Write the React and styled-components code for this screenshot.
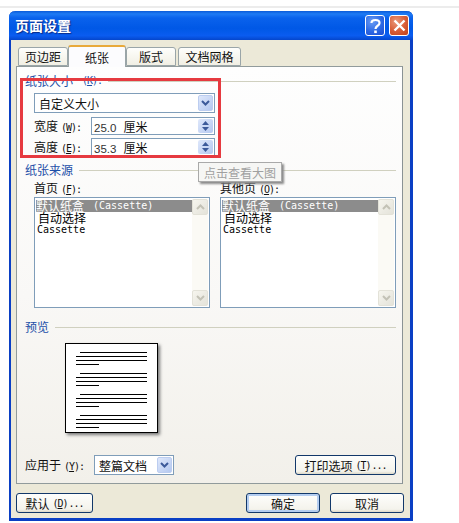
import React from "react";
import styled, { createGlobalStyle } from "styled-components";

const Global = createGlobalStyle`
  html, body { margin: 0; padding: 0; background: #fff; }
  body { font-family: "Noto Sans CJK SC", "Liberation Sans", sans-serif; font-size: 12px; color: #111; }
`;
const Page = styled.div`
  width: 459px; height: 523px; overflow: hidden; box-sizing: border-box; position: relative;
  padding: 11px 0 0 9px;
  &::before { content: ""; position: absolute; left: 0; right: 0; top: 6px; height: 2px; background: #ececec; }
`;
const Win = styled.div`
  width: 404px; height: 510px; box-sizing: border-box; position: relative;
  display: flex; flex-direction: column;
  background: #ece9d8; border: solid #0a3fc4; border-width: 0 3px 3px 2px;
  border-radius: 6px 6px 0 0;
`;
const TitleBar = styled.div`
  height: 29px; margin: 0 -3px 0 -2px; padding: 0 4px 0 6px; flex: none;
  display: flex; align-items: center; gap: 4px; border-radius: 6px 6px 0 0;
  background: linear-gradient(180deg, #0a5ad8 0%, #1f7bf4 10%, #0a62ec 24%, #0058e6 60%, #0a5cf0 85%, #0546cc 100%);
`;
const Title = styled.div`
  flex: 1; color: #fff; font-size: 14px; font-weight: 700; line-height: 29px; padding-left: 0;
  text-shadow: 1px 1px 1px #0a2a88;
`;
const CapBtn = styled.div`
  width: 20px; height: 21px; box-sizing: border-box; border: 1px solid #fff; border-radius: 3px;
  display: flex; align-items: center; justify-content: center;
  background: ${p => p.$close
    ? "radial-gradient(circle at 35% 30%, #ea9a7c 0%, #d9603a 50%, #c04018 100%)"
    : "radial-gradient(circle at 35% 30%, #6a9cf4 0%, #2c68e4 55%, #1c4cd0 100%)"};
`;
const Body = styled.div`
  flex: 1; display: flex; flex-direction: column; padding: 5px 7px 0 5px; min-height: 0;
`;
const Tabs = styled.div`
  display: flex; align-items: flex-end; height: 21px; padding-left: 2px; flex: none; position: relative; z-index: 1;
`;
const Tab = styled.div`
  box-sizing: border-box; width: ${p => p.$w}px; height: ${p => p.$on ? 22 : 19}px;
  margin-right: ${p => p.$gap || 0}px; margin-bottom: ${p => p.$on ? -1 : 0}px;
  display: flex; align-items: center; justify-content: center; font-size: 12px;
  background: ${p => p.$on ? "#fcfcfe" : "linear-gradient(180deg, #fefefc, #f1efe4)"};
  border: 1px solid #9aa5a8; border-bottom: ${p => p.$on ? "none" : "1px solid #9aa5a8"};
  border-radius: 3px 3px 0 0;
  ${p => p.$on && "border-top: 2px solid #e8a93a;"}
`;
const Panel = styled.div`
  width: 387px; height: 418px; box-sizing: border-box; flex: none; position: relative;
  border: 1px solid #919b9c; border-right-color: #8a9294; padding: 8px 6px 8px 8px;
  background: linear-gradient(180deg, #fefefe 0%, #f9f8f6 55%, #f2f0ea 100%);
`;
const Heading = styled.div`
  display: flex; align-items: center; gap: 6px; height: 12px; line-height: 12px; color: #1c4fa8;
  margin-top: ${p => p.$mt || 0}px;
  &::after { content: ""; flex: 1; height: 1px; background: #d0d0bf; }
`;
const Indent = styled.div`
  padding-left: 9px; width: 190px; box-sizing: border-box;
`;
const Select = styled.div`
  box-sizing: border-box; width: ${p => p.$w}px; height: 20px; margin-top: ${p => p.$mt || 0}px;
  display: flex; align-items: center; justify-content: space-between; flex: none;
  border: 1px solid #7f9db9; background: #fff; padding: 1px 1px 1px 4px; font-size: 12px;
`;
const DropBtn = styled.div`
  width: 15px; height: 16px; border-radius: 2px; background: linear-gradient(135deg, #dfe8fb, #b4c8f0);
  border: 1px solid #bccdf0; box-sizing: border-box; display: flex; align-items: center; justify-content: center;
`;
const Row = styled.div`
  display: flex; align-items: center; justify-content: space-between; margin-top: ${p => p.$mt}px; height: 18px;
`;
const Spin = styled.div`
  box-sizing: border-box; width: 124px; height: 18px; border: 1px solid #7f9db9; background: #fff;
  display: flex; align-items: center; justify-content: space-between; padding: 0 1px 0 2px;
`;
const Measure = styled.span`
  font-family: "Liberation Sans", sans-serif; font-size: 11.5px; color: #333;
`;
const Unit = styled.span`
  margin-left: 7px; font-size: 12px;
`;
const SpinBtns = styled.div`
  width: 15px; height: 14px; border-radius: 2px; background: linear-gradient(135deg, #dfe8fb, #b4c8f0);
  display: flex; flex-direction: column; align-items: center; justify-content: center; gap: 2px;
`;
const Mn = styled.span`
  font-family: "DejaVu Sans Mono", monospace; font-size: 10px; margin-left: 3px; letter-spacing: -1px;
  u { text-decoration: underline; }
`;
const Dots = styled.span`
  letter-spacing: -1px; margin-left: 1px;
`;
const Label = styled.div`
  line-height: 12px; height: 12px; white-space: nowrap;
  width: ${p => (p.$w ? `${p.$w}px` : "auto")}; flex: none;
`;
const Lists = styled.div`
  display: flex; gap: 10px; padding-left: 9px; margin-top: 6px;
`;
const ListCol = styled.div`
  width: 176px; flex: none;
`;
const ListBox = styled.div`
  margin-top: 3px; height: 111px; box-sizing: border-box; border: 1px solid #7f9db9; background: #fff;
  display: flex; padding: 1px;
`;
const Items = styled.div`
  flex: 1; min-width: 0; display: flex; flex-direction: column; padding-top: 1px;
`;
const Item = styled.div`
  height: 12px; line-height: 12px; padding-left: ${p => p.$pad || 0}px;
  white-space: nowrap; background: ${p => p.$sel ? "#8c8c8c" : "transparent"}; color: ${p => p.$sel ? "#fff" : "#000"};
  display: flex; align-items: center; font-size: 12px;
`;
const Mono = styled.span`
  font-family: "DejaVu Sans Mono", monospace; font-size: 10px; letter-spacing: 0;
  margin-left: ${p => p.$ml || 0}px;
`;
const Track = styled.div`
  width: 16px; flex: none; display: flex; flex-direction: column; justify-content: space-between;
  background: #fbfaf5;
`;
const ScrollBtn = styled.div`
  height: 16px; box-sizing: border-box; border: 1px solid #e3e2d8; border-radius: 2px;
  background: linear-gradient(135deg, #f6f5ee, #e4e3da); display: flex; align-items: center; justify-content: center;
`;
const Sheet = styled.div`
  width: 93px; height: 90px; box-sizing: border-box; margin: 10px 0 0 40px; background: #fff;
  border: 1px solid #000; box-shadow: 2px 2px 3px #7a7a7a; padding: 8px 10px 0 10px;
  display: flex; flex-direction: column; gap: 8px;
`;
const Para = styled.div`
  display: flex; flex-direction: column; gap: 3px;
`;
const Line = styled.div`
  height: 1px; background: #000; margin-left: ${p => p.$ml || 0}px; width: ${p => p.$w}px;
`;
const Bottom = styled.div`
  display: flex; align-items: center; justify-content: space-between; margin-top: 22px; height: 20px;
`;
const Apply = styled.div`
  display: flex; align-items: center;
`;
const Btn = styled.div`
  box-sizing: border-box; width: ${p => p.$w}px; height: 20px; flex: none;
  border: 1px solid #12386a; border-radius: 3px; background: linear-gradient(180deg, #fefefc, #f4f3ec 85%, #dcd8c8);
  display: flex; align-items: center; justify-content: center; font-size: 12px; white-space: nowrap;
  ${p => p.$def && "box-shadow: inset 0 0 0 2px #b4cdf0;"}
`;
const Footer = styled.div`
  display: flex; align-items: center; margin: 9px -1px 0 0; gap: 10px;
`;
const Spacer = styled.div`
  flex: 1;
`;
const RedBox = styled.div`
  position: absolute; left: 3px; top: 11px; width: 201px; height: 80px; box-sizing: border-box;
  border: 3px solid #e63a40; pointer-events: none; z-index: 3;
`;
const Tip = styled.div`
  position: absolute; left: 181px; top: 95px; width: 84px; height: 20px; box-sizing: border-box; z-index: 3;
  background: #f6f6f4; border: 1px solid #a9a9a9; color: #a0a0a0; box-shadow: 2px 2px 2px #8a8a8a;
  display: flex; align-items: center; justify-content: center; font-size: 12px;
`;

const Chev = ({ up, color = "#3c5a9a", w = 9 }) => (
  <svg width={w} height={6} viewBox="0 0 9 6">
    <path d={up ? "M1 5 L4.5 1.5 L8 5" : "M1 1 L4.5 4.5 L8 1"} fill="none" stroke={color} strokeWidth="2" />
  </svg>
);
const Tri = ({ up }) => (
  <svg width={7} height={4} viewBox="0 0 7 4">
    <path d={up ? "M0 4 L3.5 0 L7 4 Z" : "M0 0 L3.5 4 L7 0 Z"} fill="#3c5a9a" />
  </svg>
);
const Drop = () => <DropBtn><Chev /></DropBtn>;
const Spinner = () => <SpinBtns><Tri up /><Tri /></SpinBtns>;

const List = ({ label, k }) => (
  <ListCol>
    <Label>{label}<Mn>(<u>{k}</u>):</Mn></Label>
    <ListBox>
      <Items>
        <Item $sel>默认纸盒<Mono $ml={9}>(Cassette)</Mono></Item>
        <Item $pad={2}>自动选择</Item>
        <Item $pad={1}><Mono>Cassette</Mono></Item>
      </Items>
      <Track>
        <ScrollBtn><Chev up color="#c3c2b6" /></ScrollBtn>
        <ScrollBtn><Chev color="#c3c2b6" /></ScrollBtn>
      </Track>
    </ListBox>
  </ListCol>
);
const P = () => (
  <Para>
    <Line $ml={4} $w={67} />
    <Line $w={71} />
    <Line $w={71} />
    <Line $w={23} />
  </Para>
);

export default function App() {
  return (
    <Page>
      <Global />
      <Win>
        <TitleBar>
          <Title>页面设置</Title>
          <CapBtn>
            <svg width="13" height="16" viewBox="0 0 13 16"><path d="M2.5 5 C2.5 1 10.5 1 10.5 5 C10.5 8 6.5 7.5 6.5 11" fill="none" stroke="#fff" strokeWidth="2.2" /><rect x="5.2" y="12.5" width="2.6" height="2.6" fill="#fff" /></svg>
          </CapBtn>
          <CapBtn $close>
            <svg width="13" height="13" viewBox="0 0 13 13"><path d="M1.5 1.5 L11.5 11.5 M11.5 1.5 L1.5 11.5" stroke="#fff" strokeWidth="2.4" /></svg>
          </CapBtn>
        </TitleBar>
        <Body>
          <Tabs>
            <Tab $w={50}>页边距</Tab>
            <Tab $w={58} $on>纸张</Tab>
            <Tab $w={50} $gap={2}>版式</Tab>
            <Tab $w={63}>文档网格</Tab>
          </Tabs>
          <Panel>
            <Heading>纸张大小<Mn>(<u>K</u>):</Mn></Heading>
            <Indent>
              <Select $w={181} $mt={6}>自定义大小<Drop /></Select>
              <Row $mt={4}>
                <Label>宽度<Mn>(<u>W</u>):</Mn></Label>
                <Spin><span><Measure>25.0</Measure><Unit>厘米</Unit></span><Spinner /></Spin>
              </Row>
              <Row $mt={3}>
                <Label>高度<Mn>(<u>E</u>):</Mn></Label>
                <Spin><span><Measure>35.3</Measure><Unit>厘米</Unit></span><Spinner /></Spin>
              </Row>
            </Indent>
            <Heading $mt={8}>纸张来源</Heading>
            <Lists>
              <List label="首页" k="F" />
              <List label="其他页" k="O" />
            </Lists>
            <Heading $mt={13}>预览</Heading>
            <Sheet><P /><P /><P /><P /></Sheet>
            <Bottom>
              <Apply>
                <Label $w={69}>应用于<Mn>(<u>Y</u>):</Mn></Label>
                <Select $w={80}>整篇文档<Drop /></Select>
              </Apply>
              <Btn $w={101}>打印选项<Mn>(<u>T</u>)<Dots>...</Dots></Mn></Btn>
            </Bottom>
            <RedBox />
            <Tip>点击查看大图</Tip>
          </Panel>
          <Footer>
            <Btn $w={77}>默认<Mn>(<u>D</u>)<Dots>...</Dots></Mn></Btn>
            <Spacer />
            <Btn $w={74} $def>确定</Btn>
            <Btn $w={74}>取消</Btn>
          </Footer>
        </Body>
      </Win>
    </Page>
  );
}
